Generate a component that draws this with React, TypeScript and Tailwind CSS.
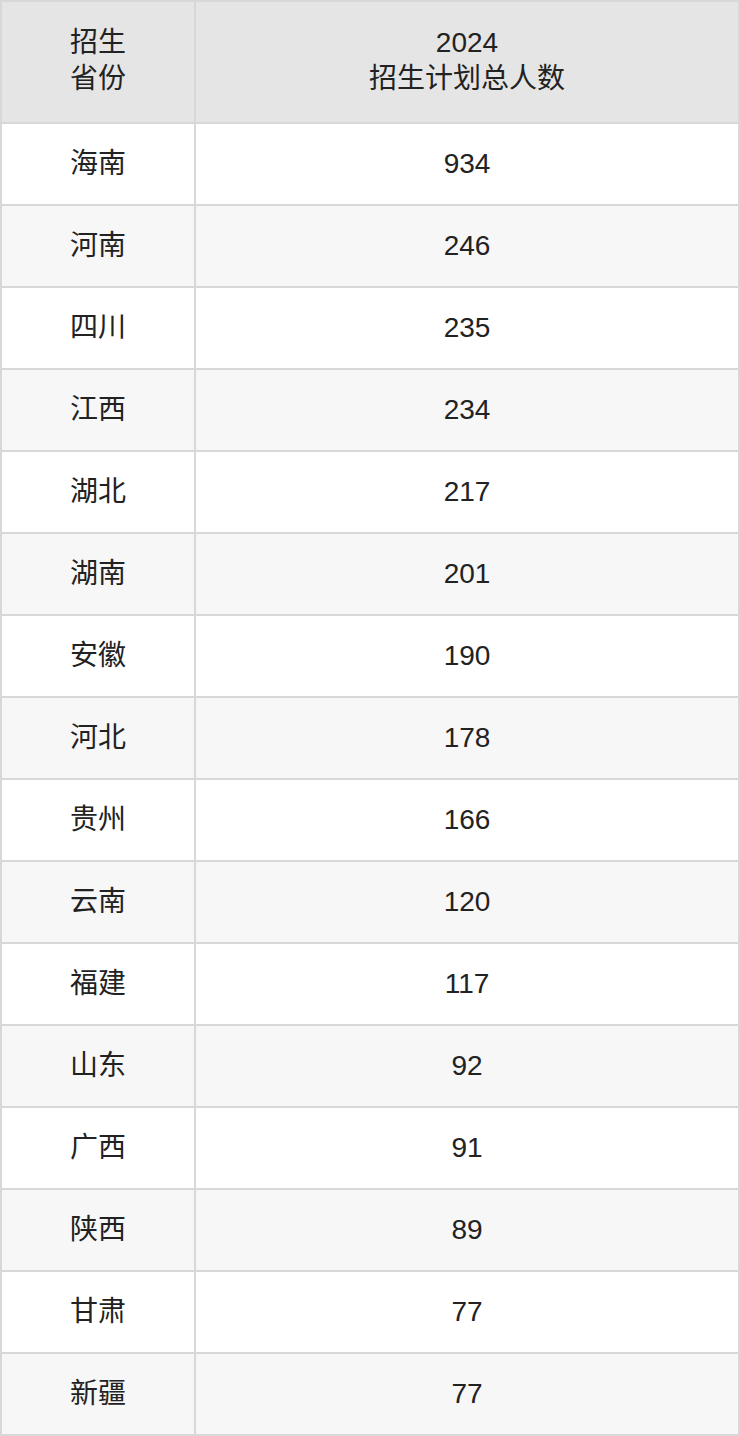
import React from "react";

const rows: [string, string][] = [
  ["海南", "934"],
  ["河南", "246"],
  ["四川", "235"],
  ["江西", "234"],
  ["湖北", "217"],
  ["湖南", "201"],
  ["安徽", "190"],
  ["河北", "178"],
  ["贵州", "166"],
  ["云南", "120"],
  ["福建", "117"],
  ["山东", "92"],
  ["广西", "91"],
  ["陕西", "89"],
  ["甘肃", "77"],
  ["新疆", "77"],
];

export default function App() {
  return (
    <div
      className="w-[740px] bg-white text-[#222222] text-[28px] leading-[36px]"
      style={{ fontFamily: '"Liberation Sans", Arial, "Noto Sans CJK SC", sans-serif' }}
    >
      <div className="border-2 border-[#d8d8d8] border-b-0">
        <div className="flex h-[122px] bg-[#e5e5e5] border-b-2 border-[#d8d8d8]">
          <div className="w-[192px] flex flex-col items-center justify-center pb-[2px]">
            <div>招生</div>
            <div>省份</div>
          </div>
          <div className="w-[2px] bg-[#d8d8d8]" />
          <div className="flex-1 flex flex-col items-center justify-center pb-[2px]">
            <div>2024</div>
            <div>招生计划总人数</div>
          </div>
        </div>
        {rows.map(([p, n], i) => (
          <div
            key={i}
            className={`flex h-[82px] border-b-2 border-[#d8d8d8] ${i % 2 === 0 ? "bg-white" : "bg-[#f7f7f7]"}`}
          >
            <div className="w-[192px] flex items-center justify-center">{p}</div>
            <div className="w-[2px] bg-[#d8d8d8]" />
            <div className="flex-1 flex items-center justify-center">{n}</div>
          </div>
        ))}
      </div>
    </div>
  );
}
